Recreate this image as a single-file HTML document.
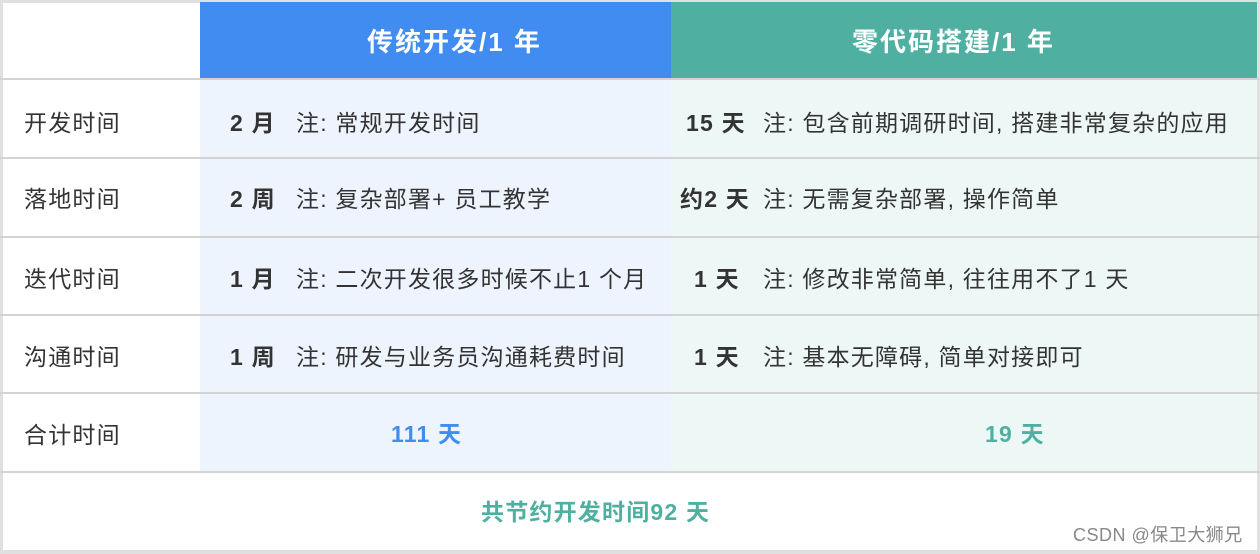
<!DOCTYPE html>
<html><head><meta charset="utf-8"><style>
body{margin:0;width:1260px;height:554px;background:#fff;font-family:"Liberation Sans","Noto Sans CJK SC",sans-serif;position:relative;overflow:hidden;color:#333}
.a{position:absolute}
.hl{position:absolute;left:0;width:1260px;height:2px;background:#d3d3d3}
.t{position:absolute;font-size:23px;line-height:26px;white-space:nowrap;letter-spacing:1.2px}
.b{font-weight:bold}
</style></head><body>
<div class="a" style="left:0;top:0;width:1260px;height:554px;box-sizing:border-box;border:3px solid #e0e0e0;border-bottom-width:4px"></div>
<div class="a" style="left:200px;top:2px;width:471px;height:78px;background:#418cf0"></div>
<div class="a" style="left:671px;top:2px;width:586px;height:78px;background:#4fb0a2"></div>
<div class="a" style="left:200px;top:80px;width:471px;height:392px;background:#edf4fd"></div>
<div class="a" style="left:671px;top:80px;width:586px;height:392px;background:#edf8f6"></div>
<div class="hl" style="top:78px"></div>
<div class="hl" style="top:157px"></div>
<div class="hl" style="top:236px"></div>
<div class="hl" style="top:314px"></div>
<div class="hl" style="top:392px"></div>
<div class="hl" style="top:471px"></div>
<div class="t b" style="left:367px;top:27px;color:#fff;font-size:26px;letter-spacing:2px;line-height:30px">传统开发/1 年</div>
<div class="t b" style="left:852px;top:27px;color:#fff;font-size:26px;letter-spacing:2px;line-height:30px">零代码搭建/1 年</div>

<div class="t" style="left:24px;top:110px">开发时间</div>
<div class="t" style="left:24px;top:186px">落地时间</div>
<div class="t" style="left:24px;top:266px">迭代时间</div>
<div class="t" style="left:24px;top:344px">沟通时间</div>
<div class="t" style="left:24px;top:422px">合计时间</div>

<div class="t b" style="left:230px;top:110px">2 月</div><div class="t" style="left:296px;top:110px">注: 常规开发时间</div>
<div class="t b" style="left:230px;top:186px">2 周</div><div class="t" style="left:296px;top:186px">注: 复杂部署+ 员工教学</div>
<div class="t b" style="left:230px;top:266px">1 月</div><div class="t" style="left:296px;top:266px">注: 二次开发很多时候不止1 个月</div>
<div class="t b" style="left:230px;top:344px">1 周</div><div class="t" style="left:296px;top:344px">注: 研发与业务员沟通耗费时间</div>

<div class="t b" style="left:686px;top:110px">15 天</div><div class="t" style="left:763px;top:110px">注: 包含前期调研时间, 搭建非常复杂的应用</div>
<div class="t b" style="left:680px;top:186px">约2 天</div><div class="t" style="left:763px;top:186px">注: 无需复杂部署, 操作简单</div>
<div class="t b" style="left:694px;top:266px">1 天</div><div class="t" style="left:763px;top:266px">注: 修改非常简单, 往往用不了1 天</div>
<div class="t b" style="left:694px;top:344px">1 天</div><div class="t" style="left:763px;top:344px">注: 基本无障碍, 简单对接即可</div>

<div class="t b" style="left:391px;top:421px;color:#418cf0">111 天</div>
<div class="t b" style="left:985px;top:421px;color:#4fb0a2">19 天</div>
<div class="t b" style="left:481px;top:499px;color:#4fb0a2">共节约开发时间92 天</div>
<div class="t" style="left:1073px;top:524px;font-size:18px;line-height:22px;letter-spacing:0.5px;color:#888">CSDN @保卫大狮兄</div>
</body></html>
